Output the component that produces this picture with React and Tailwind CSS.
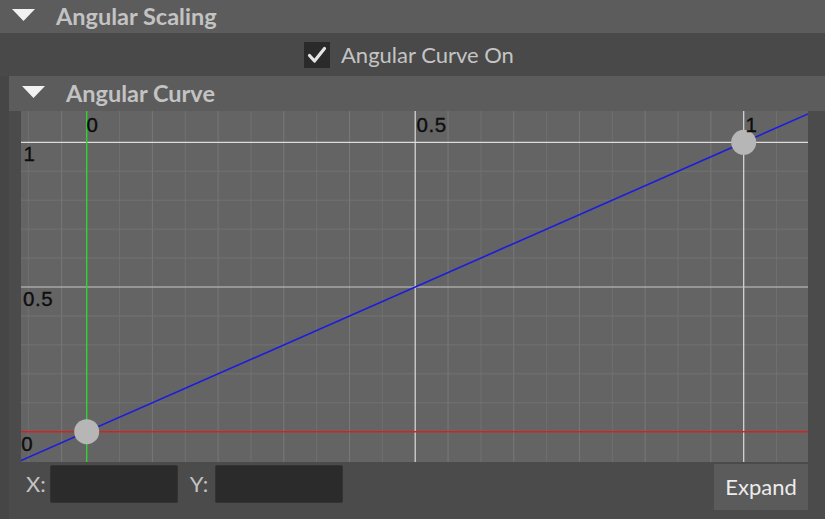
import React from "react";

const X = (v) => 65.7 + 657 * v;
const Y = (v) => 320.7 - 289.4 * v;

function Triangle({ className }) {
  return (
    <svg width="23" height="12" viewBox="0 0 23 12" className={className}>
      <polygon points="0,0 23,0 11.5,12" fill="#f2f2f2" />
    </svg>
  );
}

function Graph() {
  const vLines = [7.3, 40.7];
  for (let k = 1; k <= 21; k++) {
    if (k === 10 || k === 20) continue;
    vLines.push(X(k * 0.05));
  }
  const hLines = [];
  for (let k = 1; k <= 9; k++) {
    if (k === 5) continue;
    hLines.push(Y(k * 0.1));
  }
  const font = { fontFamily: '"Liberation Sans", Arial, sans-serif', fontSize: "20.5px", letterSpacing: "0.6px" };
  return (
    <svg width="787" height="351" viewBox="0 0 787 351" className="block">
      <rect x="0" y="0" width="787" height="351" fill="#646464" />
      {vLines.map((x, i) => (
        <line key={"v" + i} x1={x} y1="0" x2={x} y2="351" stroke={i % 2 === 1 ? "#787878" : "#707070"} strokeWidth="1" />
      ))}
      {hLines.map((y, i) => (
        <line key={"h" + i} x1="0" y1={y} x2="787" y2={y} stroke="#727272" strokeWidth="1" />
      ))}
      <line x1={X(0.5)} y1="0" x2={X(0.5)} y2="351" stroke="#dcdcdc" strokeWidth="1.2" />
      <line x1={X(1)} y1="0" x2={X(1)} y2="351" stroke="#dcdcdc" strokeWidth="1.2" />
      <line x1="0" y1={Y(1)} x2="787" y2={Y(1)} stroke="#dcdcdc" strokeWidth="1.2" />
      <line x1="0" y1={Y(0.5)} x2="787" y2={Y(0.5)} stroke="#c8c8c8" strokeWidth="1" />
      <line x1="0" y1={Y(0)} x2="787" y2={Y(0)} stroke="#d42222" strokeWidth="1.4" />
      <line x1={X(0)} y1="0" x2={X(0)} y2="351" stroke="#2fd42f" strokeWidth="1.4" />
      <line x1="0" y1={Y(-0.1)} x2="787" y2={Y(1.0979)} stroke="#1c1ce0" strokeWidth="1.6" />
      <circle cx={X(0)} cy={Y(0)} r="12.5" fill="#b6b6b6" />
      <circle cx={X(1)} cy={Y(1)} r="12.5" fill="#b6b6b6" />
      <g fill="#0e0e0e" stroke="#0e0e0e" strokeWidth="0.35" style={font}>
        <text x="65.5" y="20.5">0</text>
        <text x="395.5" y="20.5">0.5</text>
        <text x="724.5" y="20.5">1</text>
        <text x="2.5" y="50.3">1</text>
        <text x="2" y="194.7">0.5</text>
        <text x="0.3" y="339.7">0</text>
      </g>
    </svg>
  );
}

export default function App() {
  const lato = { fontFamily: 'Lato, "Open Sans", sans-serif' };
  return (
    <div className="w-[825px] h-[519px] bg-[#4a4a4a] flex flex-col overflow-hidden" style={lato}>
      <div className="h-[33px] bg-[#5c5c5c] flex items-center shrink-0">
        <Triangle className="ml-[12px] mt-[-4px]" />
        <span className="ml-[21px] text-[23.5px] font-bold text-[#c3c3c3] leading-none">Angular Scaling</span>
      </div>
      <div className="h-[43px] flex items-center pl-[304px] shrink-0 bg-[#494949]">
        <div className="w-[26px] h-[26px] bg-[#2a2a2a] flex items-center justify-center">
          <svg width="20" height="18" viewBox="0 0 20 18">
            <path d="M2.5 9.5 L7.5 15 L17.5 2.5" fill="none" stroke="#e4e4e4" strokeWidth="3.2" strokeLinecap="round" strokeLinejoin="round" />
          </svg>
        </div>
        <span className="ml-[11px] text-[22px] text-[#c4c4c4] leading-none">Angular Curve On</span>
      </div>
      <div className="flex-1 flex flex-col bg-[#464646] pl-[9px]">
        <div className="h-[35px] bg-[#5c5c5c] flex items-center shrink-0">
          <Triangle className="ml-[13px] mt-[-4px]" />
          <span className="ml-[21px] text-[23.5px] font-bold text-[#c3c3c3] leading-none">Angular Curve</span>
        </div>
        <div className="flex-1 flex flex-col bg-[#4b4b4b]">
          <div className="pl-[12px] shrink-0">
            <Graph />
          </div>
          <div className="flex-1 flex items-start pt-[2px]">
            <span className="ml-[17px] mt-[9px] text-[22px] text-[#c2c2c2] leading-none">X:</span>
            <div className="ml-[4px] mt-[1px] w-[128px] h-[38px] bg-[#2b2b2b] rounded-[2px] border border-[#333]" />
            <span className="ml-[12px] mt-[9px] text-[22px] text-[#c2c2c2] leading-none">Y:</span>
            <div className="ml-[7px] mt-[1px] w-[128px] h-[38px] bg-[#2b2b2b] rounded-[2px] border border-[#333]" />
            <button className="ml-auto mr-[17px] w-[94px] h-[46px] bg-[#5b5b5b] text-[22px] text-[#ececec] leading-none flex items-center justify-center">
              Expand
            </button>
          </div>
        </div>
      </div>
    </div>
  );
}
